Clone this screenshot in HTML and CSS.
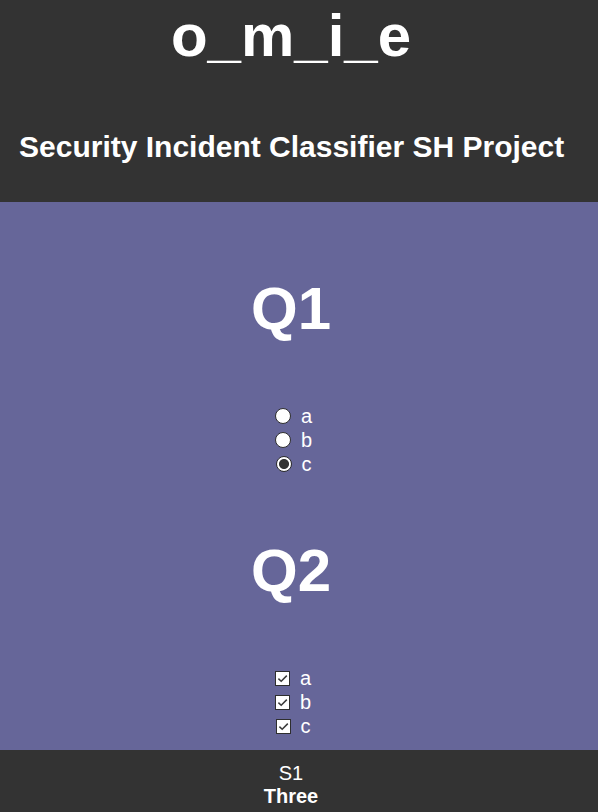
FILE: index.html
```html
<!DOCTYPE html>
<html lang="en">
<head>
<meta charset="utf-8">
<title>o_m_i_e</title>
<link rel="stylesheet" href="styles.css">
</head>
<body>
<header class="top">
  <h1 class="brand">o_m_i_e</h1>
  <h2 class="project">Security Incident Classifier SH Project</h2>
</header>
<main class="quiz">
  <section class="question">
    <h2 class="qtitle">Q1</h2>
    <div class="options">
      <label class="opt"><input class="radio" type="radio" name="q1" value="a"><span>a</span></label>
      <label class="opt"><input class="radio" type="radio" name="q1" value="b"><span>b</span></label>
      <label class="opt"><input class="radio" type="radio" name="q1" value="c" checked><span>c</span></label>
    </div>
  </section>
  <section class="question">
    <h2 class="qtitle">Q2</h2>
    <div class="options">
      <label class="opt"><span class="box"><svg viewBox="0 0 13 13" width="13" height="13"><path d="M2.4 6.6 L5.2 9.2 L10.8 3.6" fill="none" stroke="#3a3a3a" stroke-width="1.5"/></svg></span><span>a</span></label>
      <label class="opt"><span class="box"><svg viewBox="0 0 13 13" width="13" height="13"><path d="M2.4 6.6 L5.2 9.2 L10.8 3.6" fill="none" stroke="#3a3a3a" stroke-width="1.5"/></svg></span><span>b</span></label>
      <label class="opt"><span class="box"><svg viewBox="0 0 13 13" width="13" height="13"><path d="M2.4 6.6 L5.2 9.2 L10.8 3.6" fill="none" stroke="#3a3a3a" stroke-width="1.5"/></svg></span><span>c</span></label>
    </div>
  </section>
</main>
<footer class="foot">
  <div class="s1">S1</div>
  <div class="three">Three</div>
</footer>
</body>
</html>
```
FILE: styles.css
```css
html, body {
  margin: 0;
  padding: 0;
}
body {
  font-family: "Liberation Sans", Arial, sans-serif;
  color: #ffffff;
  background: #333333;
}
.top {
  background: #333333;
  padding: 1px 16px 38px 0;
}
.brand {
  margin: 0;
  font-size: 60px;
  font-weight: bold;
  line-height: 69px;
  text-align: center;
}
.project {
  margin: 59px 0 0 19px;
  font-size: 30px;
  font-weight: bold;
  line-height: 35px;
}
.quiz {
  background: #666699;
  padding: 72px 16px 12px 0;
  display: flex;
  flex-direction: column;
  gap: 60px;
}
.question {
  display: flex;
  flex-direction: column;
  gap: 61px;
}
.qtitle {
  margin: 0;
  font-size: 60px;
  font-weight: bold;
  line-height: 69px;
  text-align: center;
}
.options {
  display: flex;
  flex-direction: column;
}
.opt {
  height: 24px;
  display: flex;
  align-items: center;
  justify-content: center;
  font-size: 20px;
}
.radio {
  appearance: none;
  -webkit-appearance: none;
  margin: 0 10px 0 5px;
  width: 16px;
  height: 16px;
  border-radius: 50%;
  border: 1.5px solid #2e2e2e;
  background: #ffffff;
  box-sizing: border-box;
  flex: none;
}
.radio:checked {
  background: radial-gradient(circle, #333333 0, #333333 4.6px, #ffffff 5.4px);
}
.box {
  width: 15px;
  height: 15px;
  margin: 0 10px 0 4px;
  box-sizing: border-box;
  border: 1px solid #2e2e2e;
  background: #ffffff;
  display: flex;
  align-items: center;
  justify-content: center;
  flex: none;
}
.box svg {
  display: block;
}
.foot {
  background: #333333;
  padding: 12px 16px 4px 0;
  text-align: center;
  font-size: 20px;
  line-height: 23px;
}
.three {
  font-weight: bold;
}
```
